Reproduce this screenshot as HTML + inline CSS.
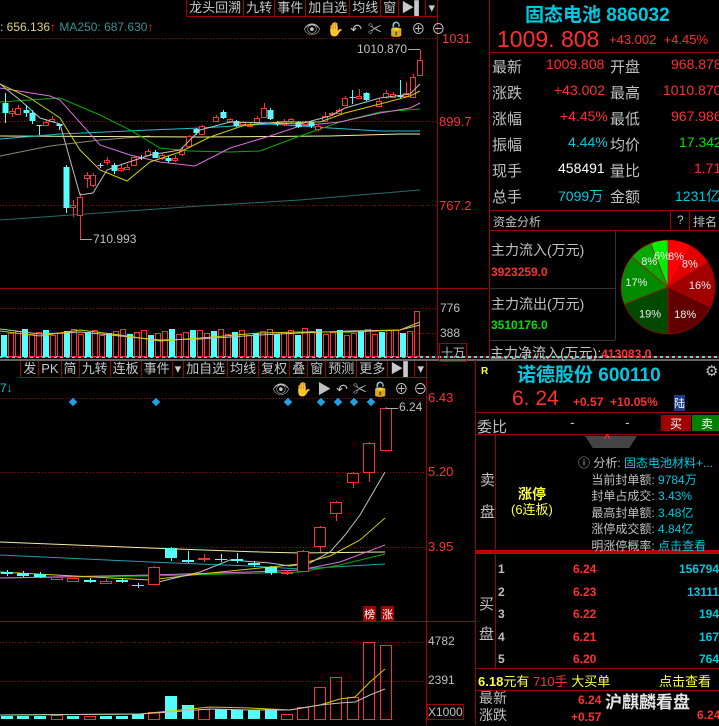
<!DOCTYPE html>
<html><head><meta charset="utf-8"><style>
*{margin:0;padding:0;box-sizing:border-box}
body{width:719px;height:725px;background:#000;overflow:hidden;position:relative;font-family:"Liberation Sans","Noto Sans CJK SC",sans-serif;font-size:13px;color:#c8c8c8}
.a{position:absolute;white-space:nowrap}
.tb{position:absolute;height:17px;border:1px solid #a00000;border-top:none;display:flex;background:#000;white-space:nowrap}
.tb span{flex-shrink:0;white-space:nowrap;border-right:1px solid #a00000;padding:0 2px;font-size:13px;line-height:16px;color:#c8c8c8;position:relative}
.r{color:#ff3030}.c{color:#00c8e0}.g{color:#00e000}.w{color:#fff}.y{color:#ffff40}.gr{color:#c0c0c0}
.row{position:absolute;left:490px;width:229px;height:26px;font-size:15px}
svg{position:absolute;left:0;top:0}
</style></head><body>
<svg id="s" width="719" height="725"></svg>

<!-- top toolbar -->
<div class="tb" style="right:281px;top:0"><span>龙头回溯</span><span>九转</span><span>事件</span><span>加自选</span><span>均线</span><span>窗</span><span class="w">▶▌</span><span style="border-right:none">▾</span></div>
<div class="a" style="left:0;top:20px;font-size:12px"><span style="color:#e0d080">: 656.136</span><span class="r">↑</span> <span style="color:#3a9090">MA250: 687.630</span><span class="r">↑</span></div>
<div class="a gr" style="left:303px;top:19px;font-size:14px;letter-spacing:6px">👁✋↶✂🔓⊕⊖</div>
<div class="a gr" style="left:357px;top:42px;font-size:12px">1010.870</div>
<div class="a r" style="left:442px;top:31px;font-size:13px">1031</div>
<div class="a r" style="left:439px;top:114px;font-size:13px">899.7</div>
<div class="a r" style="left:439px;top:198px;font-size:13px">767.2</div>
<div class="a gr" style="left:93px;top:232px;font-size:12px">710.993</div>
<div class="a gr" style="left:440px;top:301px;font-size:12px">776</div>
<div class="a gr" style="left:440px;top:326px;font-size:12px">388</div>
<div class="a gr" style="left:439px;top:343px;font-size:12px;border:1px solid #a00000;padding:0 1px">十万</div>

<!-- top right -->
<div class="a c" style="left:525px;top:0;font-size:19px;font-weight:bold">固态电池 886032</div>
<div class="a r" style="left:497px;top:26px;font-size:23px">1009. 808</div>
<div class="a r" style="left:609px;top:32px;font-size:13px">+43.002 &nbsp;+4.45%</div>
<div class="row" style="top:56px"><span class="a gr" style="left:2px">最新</span><span class="a r" style="left:56px;font-size:14px">1009.808</span><span class="a gr" style="left:120px">开盘</span><span class="a r" style="left:181px;font-size:14px">968.878</span></div>
<div class="row" style="top:82px"><span class="a gr" style="left:2px">涨跌</span><span class="a r" style="left:64px;font-size:14px">+43.002</span><span class="a gr" style="left:120px">最高</span><span class="a r" style="left:173px;font-size:14px">1010.870</span></div>
<div class="row" style="top:108px"><span class="a gr" style="left:2px">涨幅</span><span class="a r" style="left:70px;font-size:14px">+4.45%</span><span class="a gr" style="left:120px">最低</span><span class="a r" style="left:181px;font-size:14px">967.986</span></div>
<div class="row" style="top:134px"><span class="a gr" style="left:2px">振幅</span><span class="a c" style="left:78px;font-size:14px">4.44%</span><span class="a gr" style="left:120px">均价</span><span class="a g" style="left:189px;font-size:14px">17.342</span></div>
<div class="row" style="top:160px"><span class="a gr" style="left:2px">现手</span><span class="a w" style="left:68px;font-size:14px">458491</span><span class="a gr" style="left:120px">量比</span><span class="a r" style="left:204px;font-size:14px">1.71</span></div>
<div class="row" style="top:186px"><span class="a gr" style="left:2px">总手</span><span class="a c" style="left:68px;font-size:14px">7099万</span><span class="a gr" style="left:120px">金额</span><span class="a c" style="left:185px;font-size:14px">1231亿</span></div>
<div class="a gr" style="left:493px;top:213px;font-size:12px">资金分析</div>
<div class="a gr" style="left:677px;top:213px;font-size:12px">?</div>
<div class="a gr" style="left:693px;top:213px;font-size:12px">排名</div>
<div class="a gr" style="left:491px;top:240px;font-size:14px">主力流入(万元)</div>
<div class="a r" style="left:491px;top:265px;font-size:12px;font-weight:bold">3923259.0</div>
<div class="a gr" style="left:491px;top:294px;font-size:14px">主力流出(万元)</div>
<div class="a g" style="left:491px;top:318px;font-size:12px;font-weight:bold">3510176.0</div>
<div class="a gr" style="left:490px;top:343px;font-size:14px">主力净流入(万元):<span class="r" style="font-size:12px;font-weight:bold">413083.0</span></div>

<!-- bottom toolbar -->
<div class="tb" style="right:292px;top:361px"><span>发</span><span>PK</span><span>简</span><span>九转</span><span>连板</span><span>事件</span><span>▾</span><span>加自选</span><span>均线</span><span>复权</span><span>叠</span><span>窗</span><span>预测</span><span>更多</span><span class="w">▶▌</span><span style="border-right:none">▾</span></div>
<div class="a c" style="left:0;top:381px;font-size:12px">7↓</div>
<div class="a gr" style="left:272px;top:379px;font-size:14px;letter-spacing:5px">👁✋▶↶✂🔓⊕⊖</div>
<div class="a r" style="left:428px;top:390px;font-size:13px">6.43</div>
<div class="a gr" style="left:399px;top:400px;font-size:12px">6.24</div>
<div class="a r" style="left:428px;top:464px;font-size:13px">5.20</div>
<div class="a r" style="left:428px;top:539px;font-size:13px">3.95</div>
<div class="a w" style="left:363px;top:606px;font-size:11px;background:#a00000;padding:0 1px">榜</div>
<div class="a w" style="left:381px;top:606px;font-size:11px;background:#a00000;padding:0 1px">涨</div>
<div class="a gr" style="left:428px;top:634px;font-size:12px">4782</div>
<div class="a gr" style="left:428px;top:673px;font-size:12px">2391</div>
<div class="a gr" style="left:427px;top:704px;font-size:12px;border:1px solid #a00000">X1000</div>

<!-- bottom right -->
<div class="a y" style="left:481px;top:366px;font-size:10px;font-weight:bold">R</div>
<div class="a c" style="left:517px;top:360px;font-size:19px;font-weight:bold">诺德股份 600110</div>
<div class="a gr" style="left:705px;top:362px;font-size:15px">⚙</div>
<div class="a r" style="left:512px;top:387px;font-size:21px">6. 24</div>
<div class="a r" style="left:573px;top:395px;font-size:12px;font-weight:bold">+0.57 &nbsp;+10.05%</div>
<div class="a w" style="left:674px;top:395px;font-size:11px;background:#1a3a8a">陆</div>
<div class="a gr" style="left:477px;top:416px;font-size:15px">委比</div>
<div class="a gr" style="left:570px;top:414px;font-size:14px">-</div>
<div class="a gr" style="left:625px;top:414px;font-size:14px">-</div>
<div class="a w" style="left:661px;top:415px;width:30px;height:16px;background:#a00000;text-align:center;font-size:12px">买</div>
<div class="a w" style="left:692px;top:415px;width:30px;height:16px;background:#008000;text-align:center;font-size:12px">卖</div>
<div class="a" style="left:585px;top:436px;width:52px;height:12px;background:#444;clip-path:polygon(0 0,100% 0,85% 100%,15% 100%)"></div>
<div class="a r" style="left:604px;top:433px;font-size:11px;font-weight:bold">^</div>
<div class="a gr" style="left:480px;top:465px;font-size:15px;line-height:32px">卖<br>盘</div>
<div class="a y" style="left:518px;top:484px;font-size:14px;font-weight:bold">涨停</div>
<div class="a y" style="left:511px;top:499px;font-size:13px">(6连板)</div>
<div class="a gr" style="left:578px;top:455px;font-size:12px;line-height:16.5px">ⓘ 分析: <span class="c">固态电池材料+...</span><br>&nbsp;&nbsp;&nbsp;&nbsp;当前封单额: <span class="c">9784万</span><br>&nbsp;&nbsp;&nbsp;&nbsp;封单占成交: <span class="c">3.43%</span><br>&nbsp;&nbsp;&nbsp;&nbsp;最高封单额: <span class="c">3.48亿</span><br>&nbsp;&nbsp;&nbsp;&nbsp;涨停成交额: <span class="c">4.84亿</span><br>&nbsp;&nbsp;&nbsp;&nbsp;明涨停概率: <span class="c">点击查看</span></div>
<div class="a gr" style="left:479px;top:590px;font-size:15px;line-height:30px">买<br>盘</div>
<div class="a gr" style="left:498px;top:558px;font-size:12px;font-weight:bold;line-height:22.5px">1<br>2<br>3<br>4<br>5</div>
<div class="a r" style="left:573px;top:558px;font-size:12px;font-weight:bold;line-height:22.5px">6.24<br>6.23<br>6.22<br>6.21<br>6.20</div>
<div class="a c" style="left:660px;top:558px;width:59px;text-align:right;overflow:hidden;font-size:12px;font-weight:bold;line-height:22.5px;direction:rtl"><div style="direction:ltr;width:70px">156794<br>&nbsp;&nbsp;13111<br>&nbsp;&nbsp;&nbsp;&nbsp;194<br>&nbsp;&nbsp;&nbsp;&nbsp;167<br>&nbsp;&nbsp;&nbsp;&nbsp;764</div></div>
<div class="a y" style="left:478px;top:671px;font-size:13px"><b>6.18</b>元有 <span class="r">710手</span> 大买单</div>
<div class="a y" style="left:659px;top:671px;font-size:13px">点击查看</div>
<div class="a gr" style="left:479px;top:690px;font-size:14px;line-height:17px">最新<br>涨跌</div>
<div class="a r" style="left:571px;top:692px;font-size:12px;font-weight:bold;line-height:17px;text-align:right">6.24<br>+0.57</div>
<div class="a w" style="left:605px;top:688px;font-size:17px;font-weight:bold;opacity:.9">沪麒麟看盘</div>
<div class="a r" style="left:697px;top:708px;font-size:12px;font-weight:bold">6.24</div>

<script>
var s=document.getElementById('s'),NS='http://www.w3.org/2000/svg';
function e(t,a){var n=document.createElementNS(NS,t);for(var k in a)n.setAttribute(k,a[k]);s.appendChild(n);return n}
function L(x1,y1,x2,y2,c,d,w){e('line',{x1:x1,y1:y1,x2:x2,y2:y2,stroke:c,'stroke-width':w||1,'stroke-dasharray':d||''})}
function P(pts,c){e('polyline',{points:pts.map(function(p){return p.join(',')}).join(' '),fill:'none',stroke:c,'stroke-width':1})}
L(437.5,0,437.5,360,'#a00000');L(0,288.5,488,288.5,'#a00000');
L(489.5,0,489.5,360,'#a00000');L(489,52.5,719,52.5,'#a00000');L(489,210.5,719,210.5,'#a00000');L(489,230.5,719,230.5,'#a00000');
L(0,38.5,437,38.5,'#a00000','1,2');L(0,121.5,437,121.5,'#a00000','1,2');L(0,205.5,437,205.5,'#a00000','1,2');
L(0,308.5,437,308.5,'#a00000','1,2');L(0,333.5,437,333.5,'#a00000','1,2');
L(489,288.5,615,288.5,'#333');L(489,340.5,615,340.5,'#333');L(615.5,230,615.5,340,'#333');L(670.5,210,670.5,230,'#a00000');L(689.5,210,689.5,230,'#a00000');
for(var i=0;i<719;i+=6){e('rect',{x:i,y:356,width:3,height:2,fill:'#40e0e0'});e('rect',{x:i+3,y:356,width:3,height:2,fill:'#a00000'})}
L(0,360,719,360,'#888',0,1.5);
L(426.5,377,426.5,725,'#a00000');L(0,621.5,475,621.5,'#a00000');
L(475.5,360,475.5,725,'#a00000');L(475,412.5,719,412.5,'#a00000');L(475,434.5,719,434.5,'#a00000');
e('rect',{x:476,y:550,width:243,height:4,fill:'#c00000'});
L(495.5,434,495.5,668,'#a00000');L(475,668.5,719,668.5,'#a00000');L(475,690.5,719,690.5,'#a00000');
L(0,398.5,426,398.5,'#a00000','1,2');L(0,472.5,426,472.5,'#a00000','1,2');L(0,547.5,426,547.5,'#a00000','1,2');
L(0,642.5,426,642.5,'#a00000','1,2');L(0,681.5,426,681.5,'#a00000','1,2');
var C=[[5,103,113,93,123,0],[12,111,113,108,117,1],[18,108,114,105,115,1],[26,110,113,105,117,0],[32,113,121,110,124,0],[39,125,126,125,135,0],[46,122,125,119,125,1],[52,119,121,116,122,1],[59,124,126,124,130,0],[66,167,208,165,213,0],[73,205,207,200,217,1],[80,197,215,193,240,1],[87,175,178,172,188,1],[93,175,185,173,187,1],[100,165,166,163,168,0],[107,160,162,157,165,1],[114,165,171,163,174,0],[121,168,170,165,172,1],[127,167,169,164,170,1],[134,157,165,155,166,1],[141,157,158,155,160,0],[148,151,155,149,156,1],[155,152,158,150,158,0],[162,155,158,153,160,1],[168,158,161,156,163,0],[175,158,160,155,162,1],[182,150,154,147,156,1],[189,136,146,135,147,1],[196,129,133,128,135,0],[202,126,134,125,135,1],[216,117,121,115,122,1],[223,112,118,110,119,0],[230,119,121,118,122,1],[236,121,126,120,127,0],[243,122,124,121,126,1],[250,125,126,122,127,1],[257,118,122,116,123,1],[264,108,117,103,118,1],[270,110,119,108,120,0],[277,122,124,121,126,0],[284,121,124,119,126,1],[291,119,121,118,123,1],[298,122,127,121,128,0],[305,122,124,121,126,1],[311,122,126,121,128,0],[318,126,129,124,131,1],[325,116,121,112,122,1],[332,113,114,112,116,1],[339,110,113,108,114,1],[345,98,105,96,106,1],[352,97,98,90,104,0],[359,96,98,89,99,1],[366,93,100,92,101,0],[379,101,106,99,107,1],[386,93,97,90,99,1],[393,94,97,92,98,1],[400,95,97,80,98,0],[406,93,96,82,97,1],[413,77,97,74,98,1],[420,60,75,50,76,1]];
function cand(c){var col=c[5]?'#ff3030':'#54ffff';L(c[0]+.5,c[3],c[0]+.5,c[4],col);
 if(c[5])e('rect',{x:c[0]-2.5,y:c[1]+.5,width:5,height:Math.max(c[2]-c[1],1),fill:'#000',stroke:col});
 else e('rect',{x:c[0]-2.5,y:c[1],width:6,height:Math.max(c[2]-c[1],1),fill:col});}
P([[0,156],[50,146],[100,140],[150,136]],'#8a8a70');
P([[0,220],[100,213],[200,206],[300,200],[420,190]],'#2a6a6a');
P([[0,136],[200,137],[330,136],[400,134],[420,134]],'#f0f0a0');
P([[0,139],[60,134],[150,130],[200,128],[270,124],[330,128],[380,131],[420,131]],'#20c0d0');
P([[0,102],[60,98],[100,115],[130,130],[160,148],[190,151],[230,152],[260,151],[300,136],[340,122],[380,112],[420,109]],'#00b000');
P([[0,88],[50,96],[60,100],[100,145],[130,155],[160,162],[195,166],[230,148],[270,136],[300,126],[340,122],[380,113],[410,108],[420,103]],'#e070e0');
C.forEach(cand);
P([[0,84],[30,98],[60,118],[80,150],[100,170],[127,181],[150,162],[180,152],[210,137],[245,125],[280,122],[320,122],[345,113],[380,104],[410,96],[420,91]],'#d0d000');
P([[0,84],[20,100],[40,118],[60,124],[80,195],[93,193],[107,170],[120,165],[150,155],[180,150],[200,130],[230,122],[270,123],[300,124],[330,116],[345,108],[380,98],[410,94],[420,84]],'#c0c0c0');
L(80,239.5,92,239.5,'#aaa');L(408,49.5,420,49.5,'#aaa');
for(var i=0;i<60;i++){var x=1+i*7,h=22+((i*37)%7),red=(i*5+3)%3!=0;
 if(i==59){h=46;red=1}if(i==28||i==43||i==56){h+=5}
 if(red)e('rect',{x:x+.5,y:357-h+.5,width:5,height:h-1,fill:'none',stroke:'#ff3030'});else e('rect',{x:x,y:357-h,width:6,height:h,fill:'#54ffff'});}
P([[0,329],[40,334],[80,332],[120,336],[160,340],[200,339],[260,335],[300,333],[350,331],[400,330],[420,325]],'#c0c0c0');
P([[0,331],[40,336],[80,330],[120,335],[160,341],[200,338],[260,333],[300,332],[350,332],[400,330],[420,322]],'#d0d000');
var cx=668,cy=287,r=47,A=[8,8,16,18,19,17,8,6],Cl=['#ff0000','#e00000','#a00000','#600000','#004a00','#008a00','#00a800','#00ee00'],st=0,lbl=['8%','8%','16%','18%','19%','17%','8%','6%'];
A.forEach(function(v,i){var a0=st/100*2*Math.PI-Math.PI/2,a1=(st+v)/100*2*Math.PI-Math.PI/2;
 e('path',{d:'M'+cx+','+cy+' L'+(cx+r*Math.cos(a0))+','+(cy+r*Math.sin(a0))+' A'+r+','+r+' 0 0 1 '+(cx+r*Math.cos(a1))+','+(cy+r*Math.sin(a1))+' Z',fill:Cl[i],stroke:'#c00000','stroke-width':.6});
 var am=(a0+a1)/2,t=e('text',{x:cx+r*.68*Math.cos(am),y:cy+r*.68*Math.sin(am)+4,fill:'#eee','font-size':'11','text-anchor':'middle','font-family':'Liberation Sans'});t.textContent=lbl[i];st+=v;});
[73,156,288,321,338,354,371].forEach(function(x){e('rect',{x:x-3,y:399,width:6,height:6,fill:'#20a0e0',transform:'rotate(45 '+x+' 402)'})});
P([[0,542],[150,548],[260,552],[300,553],[385,552]],'#f0f0a0');
P([[0,555],[150,562],[250,566],[300,569],[385,564]],'#20a0b0');
P([[0,578],[150,576],[300,572],[340,565],[385,554]],'#00b000');
P([[0,578],[150,575],[250,572],[300,570],[340,562],[385,545]],'#e070e0');
P([[0,572],[150,580],[200,574],[270,567],[300,564],[330,556],[360,540],[385,518]],'#d0d000');
P([[150,584],[200,572],[230,560],[270,563],[290,566],[310,563],[330,552],[345,535],[360,515],[385,472]],'#c0c0c0');
var B=[[7,572,574,570,576,0],[23,573,576,571,577,0],[40,574,577,572,578,0],[57,577,579,575,580,1],[73,578,581,576,582,1],[90,580,582,578,583,0],[106,581,583,579,584,1],[122,580,582,578,583,0],[138,585,586,583,588,0],[154,567,584,566,585,1],[171,548,558,547,561,0],[188,560,562,551,563,0],[204,558,559,554,562,1],[221,559,560,554,562,0],[237,559,561,553,563,0],[254,563,565,561,567,0],[271,567,573,566,575,0],[287,572,573,570,575,1],[303,551,571,550,572,1],[320,527,546,526,552,1],[336,502,513,501,521,1],[353,473,482,472,488,1],[369,443,472,442,482,1],[386,408,450,407,451,1]];
B.forEach(function(c){var col=c[5]?'#ff3030':'#54ffff';L(c[0]+.5,c[3],c[0]+.5,c[4],col);
 if(c[5])e('rect',{x:c[0]-5.5,y:c[1]+.5,width:11,height:Math.max(c[2]-c[1],1),fill:'#000',stroke:col});
 else e('rect',{x:c[0]-6,y:c[1],width:12,height:Math.max(c[2]-c[1],1),fill:col});});
L(386,408.5,398,408.5,'#aaa');
var V=[[7,716,0],[23,716,0],[40,716,0],[57,715,1],[73,716,0],[90,716,1],[106,716,0],[122,716,0],[138,714,0],[154,712,1],[171,696,0],[188,705,0],[204,709,1],[221,709,0],[237,710,0],[254,710,0],[271,709,0],[287,714,1],[303,707,1],[320,687,1],[336,677,1],[353,697,1],[369,642,1],[386,645,1]];
V.forEach(function(v){if(v[2])e('rect',{x:v[0]-5.5,y:v[1]+.5,width:11,height:719-v[1],fill:'none',stroke:'#ff3030'});else e('rect',{x:v[0]-6,y:v[1],width:12,height:719-v[1],fill:'#54ffff'})});
P([[0,715],[140,714],[170,711],[210,707],[250,708],[290,710],[320,705],[340,699],[355,697],[370,682],[385,669]],'#d0d000');
P([[0,715],[140,714],[170,712],[210,709],[250,710],[290,710],[320,705],[340,703],[355,702],[370,695],[385,689]],'#c0c0c0');
</script>
</body></html>
